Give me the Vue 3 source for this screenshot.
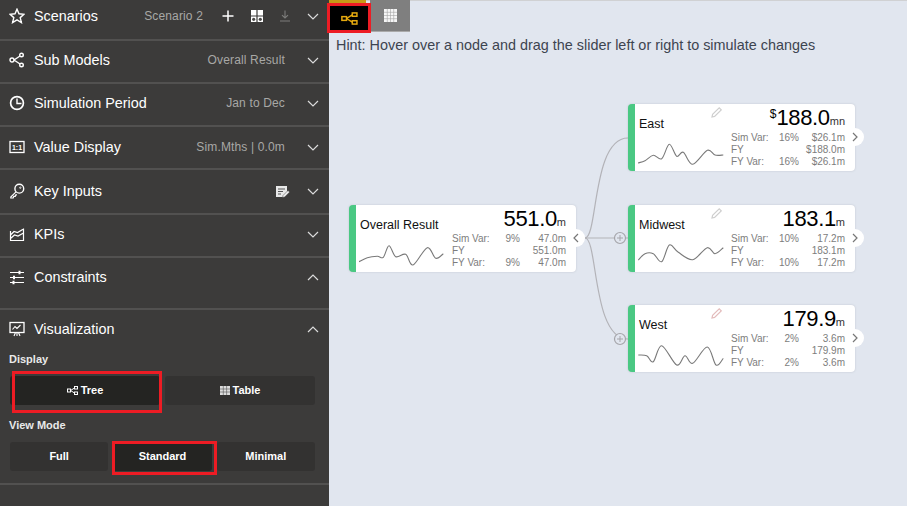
<script setup>
const sections = [
  { name: 'Scenarios', cls: 'first', icon: 'star', value: 'Scenario 2', tools: true },
  { name: 'Sub Models', cls: '', icon: 'share', value: 'Overall Result' },
  { name: 'Simulation Period', cls: '', icon: 'clock', value: 'Jan to Dec' },
  { name: 'Value Display', cls: 'lower', icon: 'ratio', value: 'Sim.Mths | 0.0m' },
  { name: 'Key Inputs', cls: 'tall', icon: 'key', edit: true },
  { name: 'KPIs', cls: '', icon: 'chart' },
  { name: 'Constraints', cls: 'open', icon: 'sliders', up: true },
]

function smooth(p) {
  let d = `M${p[0][0]} ${p[0][1]}`
  for (let i = 0; i < p.length - 1; i++) {
    const a = p[i - 1] || p[i]
    const b = p[i]
    const c = p[i + 1]
    const e = p[i + 2] || c
    const c1x = b[0] + (c[0] - a[0]) / 6
    const c1y = b[1] + (c[1] - a[1]) / 6
    const c2x = c[0] - (e[0] - b[0]) / 6
    const c2y = c[1] - (e[1] - b[1]) / 6
    d += ` C${c1x.toFixed(1)} ${c1y.toFixed(1)} ${c2x.toFixed(1)} ${c2y.toFixed(1)} ${c[0]} ${c[1]}`
  }
  return d
}

const nodes = [
  {
    name: 'Overall Result', x: 20, y: 205, prefix: '', num: '551.0', unit: 'm', dir: 'left', pencil: '',
    rows: [['Sim Var:', '9%', '47.0m'], ['FY', '', '551.0m'], ['FY Var:', '9%', '47.0m']],
    spark: [[0, 26.7], [8.3, 22.7], [18.3, 21.3], [24.3, 22.3], [30, 10.7], [36.7, 21.7], [46.7, 19.3], [54, 30], [68.3, 12.7], [76.7, 23.3], [84.3, 18.7]],
  },
  {
    name: 'East', x: 299, y: 104, prefix: '$', num: '188.0', unit: 'mn', dir: 'right', pencil: '#cfcfcf',
    rows: [['Sim Var:', '16%', '$26.1m'], ['FY', '', '$188.0m'], ['FY Var:', '16%', '$26.1m']],
    spark: [[0, 29], [7, 26.7], [15.3, 21.3], [23.7, 24.7], [31.3, 10.3], [38.7, 22.3], [45.3, 18.3], [54.7, 30.3], [69.3, 16.3], [77, 21], [85.3, 21]],
  },
  {
    name: 'Midwest', x: 299, y: 205, prefix: '', num: '183.1', unit: 'm', dir: 'right', pencil: '#cfcfcf',
    rows: [['Sim Var:', '10%', '17.2m'], ['FY', '', '183.1m'], ['FY Var:', '10%', '17.2m']],
    spark: [[0.3, 25], [7, 18.7], [15.3, 18.7], [23.7, 26.7], [31.3, 10], [40.3, 17.3], [54.7, 24.7], [69.3, 12.7], [77, 18.7], [85.3, 12.7]],
  },
  {
    name: 'West', x: 299, y: 305, prefix: '', num: '179.9', unit: 'm', dir: 'right', pencil: '#e3bcbc',
    rows: [['Sim Var:', '2%', '3.6m'], ['FY', '', '179.9m'], ['FY Var:', '2%', '3.6m']],
    spark: [[0.3, 20], [8.7, 20.7], [15.3, 26.7], [23.7, 10.7], [38.7, 30], [47, 20.7], [54.7, 28.3], [69.3, 12], [78, 30], [85.3, 23.3]],
  },
].map((n) => ({ ...n, path: smooth(n.spark) }))
</script>

<template>
  <div class="app">
    <aside class="side">
      <section v-for="s in sections" :key="s.name" class="sec" :class="s.cls">
        <header class="head">
          <svg class="ic" viewBox="0 0 16 16" fill="none" stroke="#fff" stroke-width="1.4">
            <path v-if="s.icon === 'star'" d="M8 1.2l2 4.6 5 .5-3.8 3.3 1.2 5L8 11.9l-4.4 2.7 1.2-5L1 6.3l5-.5z" />
            <g v-else-if="s.icon === 'share'">
              <circle cx="3" cy="8" r="2" />
              <circle cx="12.5" cy="3" r="1.8" />
              <circle cx="12.5" cy="13" r="1.8" />
              <path d="M5 8l6-4M5 8l6 4" />
            </g>
            <g v-else-if="s.icon === 'clock'">
              <circle cx="8" cy="8" r="6.4" stroke-width="1.7" />
              <path d="M8 3.5V8.5H12.5" />
            </g>
            <g v-else-if="s.icon === 'ratio'">
              <rect x="1" y="2.5" width="14" height="11" stroke-width="1.3" />
              <text x="8" y="10.6" class="ratio-text" text-anchor="middle" fill="#fff" stroke="none">1:1</text>
            </g>
            <g v-else-if="s.icon === 'key'">
              <circle cx="10.3" cy="5.7" r="4.4" />
              <path d="M7 8.8L1.8 14v1h2.4l.6-1.6h1.4l.6-1.6h1.2" stroke-width="1.2" />
              <circle cx="11.3" cy="4.7" r=".7" stroke-width=".8" />
            </g>
            <g v-else-if="s.icon === 'chart'">
              <path d="M1.5 5v9.5h13V2.5M1.5 9l3.5-3.5 3.5 1 6-3.5M1.5 12.5l4-3.5 3.5 1 5.5-3" stroke-width="1.2" />
            </g>
            <g v-else-if="s.icon === 'sliders'">
              <path d="M1 3.5h14M1 8.5h14M1 13.5h14" stroke-width="1.2" />
              <path d="M10.5 1.8v3.4M5 6.8v3.4M4.5 11.8v3.4" stroke-width="2" />
            </g>
          </svg>
          <span class="title">{{ s.name }}</span>
          <span v-if="s.value" class="val" :class="{ tight: s.tools }">{{ s.value }}</span>
          <span v-if="s.tools" class="tools">
            <svg width="14" height="14" viewBox="0 0 14 14" stroke="#fff" stroke-width="1.5"><path d="M7 1.5v11M1.5 7h11" /></svg>
            <svg width="12" height="12" viewBox="0 0 12 12" fill="#fff"><path d="M0 0h5.4v5.4H0zM6.6 0H12v5.4H6.6zM0 6.6h5.4V12H0zM6.6 6.6H12V12H6.6z" /><circle cx="2.7" cy="9.3" r="1.6" fill="#4a4948" /><circle cx="9.3" cy="9.3" r="1.6" fill="#4a4948" /></svg>
            <svg width="12" height="12" viewBox="0 0 12 12" fill="none" stroke="#7c7c7a" stroke-width="1.1"><path d="M6 .5v7.5M3 5.2L6 8l3-2.8M1 11h10" /></svg>
          </span>
          <svg v-if="s.edit" class="keyedit" width="14" height="12" viewBox="0 0 14 12">
            <path d="M0 0h11v7l-4 4H0z" fill="#e8e8e8" />
            <path d="M2 3h7M2 5.5h5M2 8h3" stroke="#555" stroke-width="1" />
            <path d="M7 9.5l5-5 1.6 1.6-5 5-2 .4z" fill="#f2f2f2" stroke="#3c3b3a" stroke-width=".5" />
          </svg>
          <svg class="chev" width="12" height="7" viewBox="0 0 12 7" fill="none" stroke="#dcdcdc" stroke-width="1.2">
            <path v-if="s.up" d="M1 6l5-5 5 5" />
            <path v-else d="M1 1l5 5 5-5" />
          </svg>
        </header>
      </section>

      <section class="sec viz">
        <header class="head">
          <svg class="ic" viewBox="0 0 16 16" fill="none" stroke="#fff" stroke-width="1.3">
            <rect x="1" y="1.5" width="14" height="10" />
            <path d="M3.5 8.5l2.5-3 2 2 3.5-3.5M5 15l1.5-3.5M11 15l-1.5-3.5M8 11.5V15" stroke-width="1.1" />
          </svg>
          <span class="title">Visualization</span>
          <svg class="chev" width="12" height="7" viewBox="0 0 12 7" fill="none" stroke="#dcdcdc" stroke-width="1.2"><path d="M1 6l5-5 5 5" /></svg>
        </header>
        <div class="label first-label">Display</div>
        <div class="btns two">
          <button class="btn on tree-btn">
            <svg width="11" height="9" viewBox="0 0 11 9" fill="none" stroke="#fff"><rect x=".5" y="3" width="3" height="3" /><rect x="7.5" y=".5" width="3" height="2.5" /><rect x="7.5" y="6" width="3" height="2.5" /><path d="M3.5 4.5L7.5 2M3.5 4.5L7.5 7" /></svg>
            Tree
            <i class="mark mark-tree"></i>
          </button>
          <button class="btn">
            <svg width="10" height="9" viewBox="0 0 10 9" fill="#ddd"><path d="M0 0h10v9H0z" /><path d="M0 3h10M0 6h10M3.3 0v9M6.6 0v9" stroke="#555" stroke-width=".6" /></svg>
            Table
          </button>
        </div>
        <div class="label second-label">View Mode</div>
        <div class="btns three">
          <button class="btn">Full</button>
          <button class="btn on">Standard<i class="mark mark-std"></i></button>
          <button class="btn">Minimal</button>
        </div>
      </section>
    </aside>

    <main class="main">
      <nav class="tabs">
        <div class="tab tab-tree">
          <svg width="17" height="13" viewBox="0 0 18 14" fill="none" stroke="#e5a90f" stroke-width="1.6"><rect x=".8" y="5" width="5" height="4" /><rect x="12" y="1" width="5" height="3.6" /><rect x="12" y="9.4" width="5" height="3.6" /><path d="M5.8 7L12 3M5.8 7L12 11" /></svg>
        </div>
        <div class="tab tab-table">
          <svg width="13" height="13" viewBox="0 0 13 13" fill="#f6f6f6"><path d="M0 0h13v13H0z" /><path d="M0 3.3h13M0 6.5h13M0 9.7h13M3.3 0v13M6.5 0v13M9.7 0v13" stroke="#a4a4a4" stroke-width=".6" /></svg>
        </div>
      </nav>
      <p class="hint">Hint: Hover over a node and drag the slider left or right to simulate changes</p>

      <svg class="links" width="578" height="506" viewBox="329 0 578 506" fill="none" stroke="#b3b3b8" stroke-width="1.2">
        <path d="M585 238 C598 238 592 138 628 138" />
        <path d="M585 238 H628" />
        <path d="M585 238 C598 238 592 339 628 339" />
        <g fill="#e1e6ef" stroke="#a5a5aa">
          <circle cx="620" cy="238" r="5.5" />
          <circle cx="620" cy="339" r="5.5" />
        </g>
        <path d="M617 238h6M620 235v6M617 339h6M620 336v6" stroke="#a5a5aa" stroke-width="1" />
      </svg>

      <article v-for="n in nodes" :key="n.name" class="node" :style="{ left: n.x + 'px', top: n.y + 'px' }">
        <div class="left">
          <div class="name">{{ n.name }}</div>
          <svg class="spark" width="86" height="34" viewBox="0 0 86 34" fill="none" stroke="#7a7a7a" stroke-width="1.1"><path :d="n.path" /></svg>
        </div>
        <div class="right">
          <div class="big"><sup v-if="n.prefix" class="pre">{{ n.prefix }}</sup><span class="digits">{{ n.num }}</span><span class="unit">{{ n.unit }}</span></div>
          <div class="grid">
            <template v-for="r in n.rows" :key="r[0]">
              <span>{{ r[0] }}</span><span class="r">{{ r[1] }}</span><span class="r">{{ r[2] }}</span>
            </template>
          </div>
        </div>
        <svg v-if="n.pencil" class="pencil" width="11" height="11" viewBox="0 0 11 11" fill="none" :stroke="n.pencil" stroke-width="1.2"><path d="M1 10l.6-2.6L8.2.9l2 2-6.6 6.5z" /></svg>
        <span class="toggle">
          <svg width="6" height="10" viewBox="0 0 6 10" fill="none" stroke="#777" stroke-width="1.2">
            <path v-if="n.dir === 'left'" d="M5 1L1 5l4 4" />
            <path v-else d="M1 1l4 4-4 4" />
          </svg>
        </span>
      </article>
    </main>
  </div>
</template>

<style>
html, body { margin: 0; background: #e1e6ef; }
</style>

<style scoped>
.app {
  display: flex;
  width: 907px;
  height: 506px;
  overflow: hidden;
  font-family: "Liberation Sans", Arial, sans-serif;
}
.side {
  width: 329px;
  height: 506px;
  flex: none;
  background: #3c3b3a;
  color: #fff;
  overflow: hidden;
}
.sec {
  height: 43px;
  box-sizing: border-box;
  border-bottom: 2px solid #525150;
}
.sec.first { height: 41px; }
.sec.first .head { height: 32px; }
.sec.lower .head { height: 40px; }
.sec.tall { height: 45px; }
.sec.tall .head { height: 42px; }
.sec.open { height: 52px; }
.sec.viz { height: 175px; }
.head {
  height: 38px;
  display: flex;
  align-items: center;
  padding: 0 10px 0 9px;
}
.ic { width: 16px; height: 16px; margin-right: 9px; flex: none; }
.ratio-text { font: 700 7px "Liberation Sans", Arial, sans-serif; }
.title { font-size: 14.4px; color: #fff; flex: 1; white-space: nowrap; }
.val { font-size: 12px; color: #a8a8a6; margin-right: 22px; letter-spacing: .15px; }
.val.tight { margin-right: 18px; }
.tools { display: flex; align-items: center; gap: 16px; margin-right: 16px; }
.keyedit { margin-right: 17px; margin-top: 2px; }
.chev { flex: none; }
.label { font-size: 11px; font-weight: 700; color: #e9e9e9; line-height: 14px; padding-left: 9px; }
.first-label { margin-top: 4px; }
.second-label { margin-top: 13px; }
.btns { display: grid; gap: 5px; padding: 0 14px 0 10px; }
.btns.two { grid-template-columns: 1fr 1fr; margin-top: 10px; height: 29px; }
.btns.three { grid-template-columns: 1fr 1fr 1fr; margin-top: 10px; height: 29px; }
.btn {
  position: relative;
  border: 0;
  border-radius: 3px;
  background: #333231;
  color: #fff;
  font: 700 11px "Liberation Sans", Arial, sans-serif;
  padding: 0 0 2px;
}
.btn svg { vertical-align: -1px; }
.btn.on { background: #242422; }
.mark { position: absolute; border: 3px solid #ed1c24; pointer-events: none; }
.mark-tree { left: 2px; right: -2px; top: -5px; bottom: -8px; }
.mark-std { left: -1px; right: -5px; top: -1px; bottom: -4px; }

.main {
  position: relative;
  flex: 1;
  height: 506px;
  background: #e1e6ef;
  border-top: 1px solid #d0d1d3;
  box-sizing: border-box;
}
.tabs { display: flex; align-items: flex-start; }
.tab { display: flex; align-items: center; justify-content: center; box-sizing: border-box; }
.tab-tree {
  position: relative;
  width: 44px;
  height: 30px;
  margin: 2px 0 0 -2px;
  background: #000;
  border: 3px solid #ed1c24;
}
.tab-tree::before {
  content: "";
  position: absolute;
  left: -1px;
  top: -6px;
  width: 37px;
  height: 3px;
  background: #c79a16;
}
.tab-table { width: 40px; height: 32px; margin: -1px 0 0 -1px; background: #7f7f7f; border-bottom: 1px solid #aaa; }
.hint { position: absolute; left: 7px; top: 36px; margin: 0; font-size: 14.4px; line-height: 17px; color: #3d4450; white-space: nowrap; }
.links { position: absolute; left: 0; top: -1px; }
.node {
  position: absolute;
  display: flex;
  width: 227px;
  height: 67px;
  margin-top: -1px;
  box-sizing: border-box;
  background: #fff;
  border-left: 7px solid #4ac883;
  border-radius: 4px;
  box-shadow: 0 0 2px rgba(120, 125, 140, .35);
}
.left { width: 97px; padding-left: 4px; box-sizing: border-box; }
.name { font-size: 12.5px; line-height: 16px; color: #111; margin-top: 12px; white-space: nowrap; }
.spark { display: block; margin-top: 2px; margin-left: -1px; }
.right { width: 113px; padding-top: 1px; }
.big { height: 27px; line-height: 26px; text-align: right; font-size: 22px; color: #000; white-space: nowrap; }
.digits { letter-spacing: -.35px; }
.pre { font-size: 12px; vertical-align: 7px; line-height: 0; }
.unit { font-size: 11px; color: #333; }
.grid {
  display: grid;
  grid-template-columns: 41px 27px 46px;
  margin-left: -1px;
  font-size: 10px;
  line-height: 12.2px;
  color: #7d7d7d;
  white-space: nowrap;
}
.r { text-align: right; }
.pencil { position: absolute; left: 76px; top: 3px; }
.toggle {
  position: absolute;
  left: 211px;
  top: 24px;
  width: 18px;
  height: 18px;
  background: #fff;
  border-radius: 50%;
  display: flex;
  align-items: center;
  justify-content: center;
}
</style>
